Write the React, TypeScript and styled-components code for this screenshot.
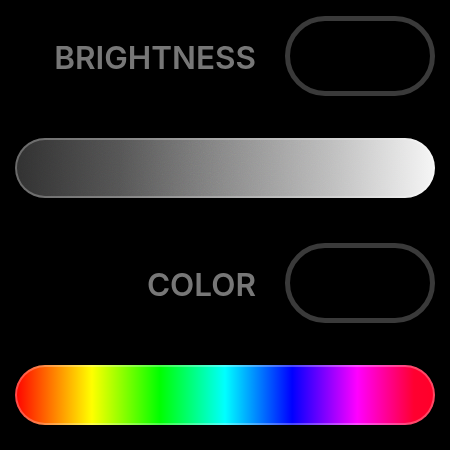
import React from "react";
import styled, { createGlobalStyle } from "styled-components";

const Global = createGlobalStyle`
  html, body { margin: 0; padding: 0; background: #000; }
  body { font-family: Inter, Roboto, "Liberation Sans", sans-serif; }
`;

const Page = styled.div`
  width: 450px;
  height: 450px;
  box-sizing: border-box;
  padding: 16px 15px 0 15px;
  display: flex;
  flex-direction: column;
  gap: 45px;
  background: #000;
`;

const Section = styled.section`
  display: flex;
  flex-direction: column;
  gap: 42px;
`;

const Row = styled.div`
  display: flex;
  justify-content: flex-end;
  align-items: center;
  gap: 29px;
`;

const Label = styled.span`
  font-size: 31.5px;
  font-weight: 600;
  color: #777777;
  letter-spacing: 0;
  line-height: 1;
  padding-top: 4px;
`;

const Toggle = styled.div`
  width: 150px;
  height: 80px;
  box-sizing: border-box;
  border: 5px solid #3a3a3a;
  border-radius: 40px;
  background: #000;
`;

const Track = styled.div<{ $bg: string }>`
  height: 60px;
  box-sizing: border-box;
  border-radius: 30px;
  border: 2px solid rgba(255, 255, 255, 0.28);
  background: ${(p) => p.$bg};
  background-origin: border-box;
  position: relative;
  overflow: hidden;
`;

const Noise = styled.svg`
  position: absolute;
  inset: 0;
  width: 100%;
  height: 100%;
  opacity: 0.12;
  mix-blend-mode: overlay;
`;

const grayBg = "linear-gradient(to right, #303030 0%, #555 25%, #8a8a8a 50%, #bdbdbd 75%, #f6f6f6 100%)";
const hueBg =
  "linear-gradient(to right, #ff0000 0%, #ffff00 18.3%, #00ff00 34.5%, #00ffff 50%, #0000ff 66%, #ff00ff 81.5%, #ff0030 95%, #ff0028 100%)";

export default function App() {
  return (
    <>
      <Global />
      <Page>
        <Section>
          <Row>
            <Label>BRIGHTNESS</Label>
            <Toggle />
          </Row>
          <Track $bg={grayBg}>
            <Noise>
              <filter id="n">
                <feTurbulence type="fractalNoise" baseFrequency="0.9" numOctaves="2" stitchTiles="stitch" />
              </filter>
              <rect width="100%" height="100%" filter="url(#n)" />
            </Noise>
          </Track>
        </Section>
        <Section>
          <Row>
            <Label>COLOR</Label>
            <Toggle />
          </Row>
          <Track $bg={hueBg} />
        </Section>
      </Page>
    </>
  );
}
